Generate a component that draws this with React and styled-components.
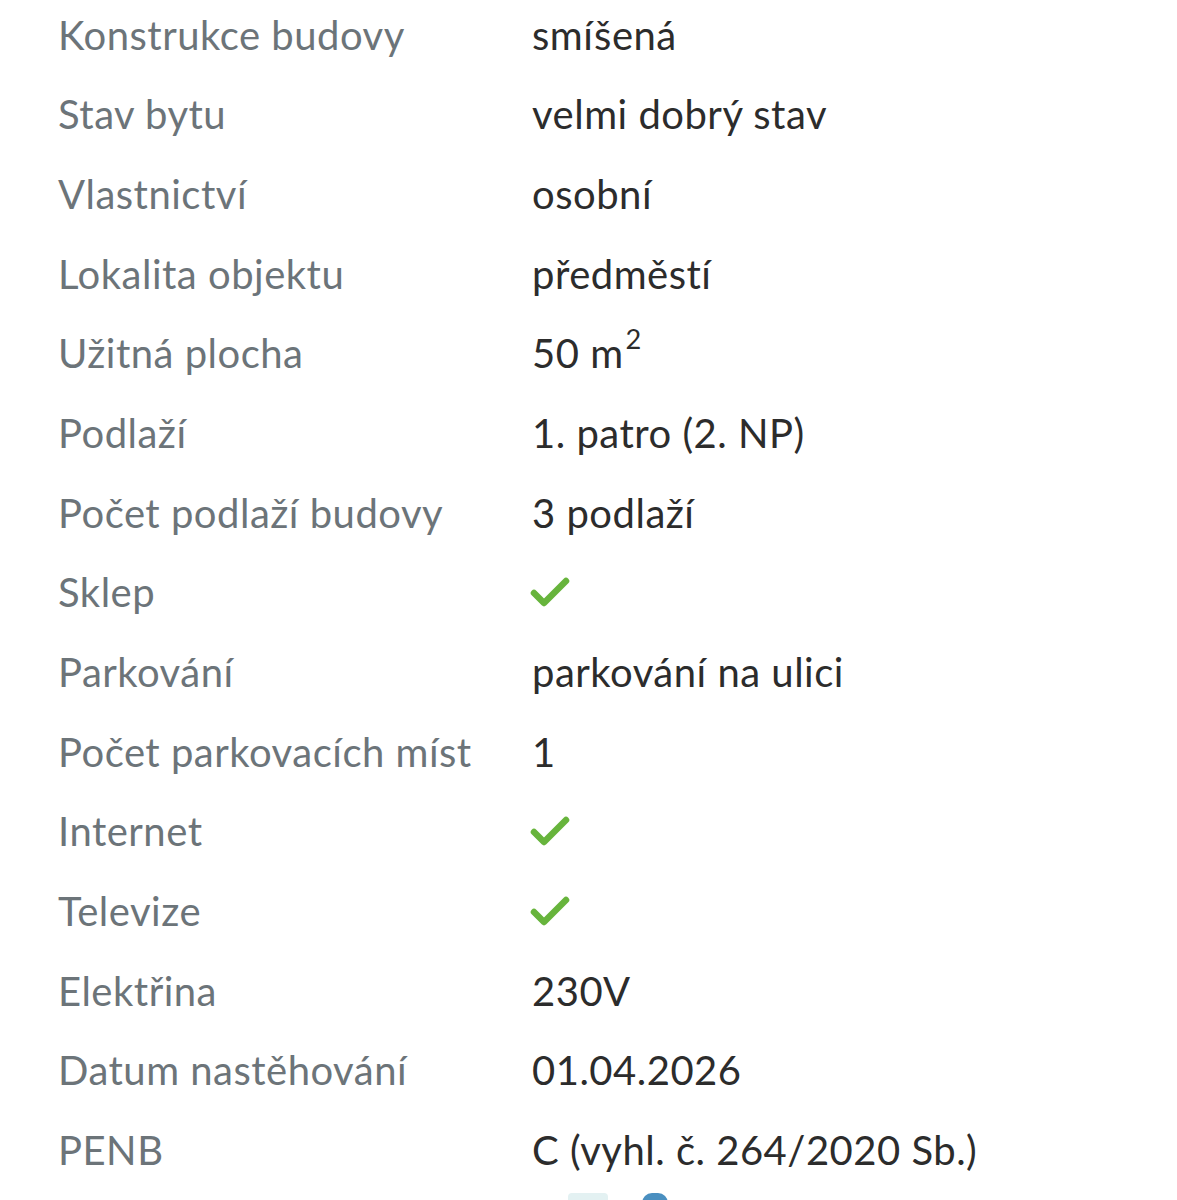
import React from 'react'
import styled, { createGlobalStyle } from 'styled-components'

const GlobalStyle = createGlobalStyle`
  body {
    margin: 0;
    background: #ffffff;
    font-family: Lato, "Noto Sans", sans-serif;
  }
`

const Table = styled.div`
  display: grid;
  grid-template-columns: 474px 1fr;
  grid-auto-rows: 79.65px;
  margin-top: -5px;
  padding-left: 58px;
`

const Label = styled.div`
  display: flex;
  align-items: center;
  color: #6c7479;
  font-size: 40px;
  letter-spacing: 0.5px;
  white-space: nowrap;
`

const Value = styled(Label)`
  color: #2c2c2c;
`

const Sup = styled.span`
  font-size: 0.68em;
  position: relative;
  top: -0.55em;
  margin-left: 2px;
`

const Check = styled.svg`
  width: 42px;
  height: 34px;
  margin-left: -3px;
`

const Footer = styled.div`
  display: flex;
  gap: 34px;
  padding-left: 568px;
  padding-top: 3px;
`

const Pill = styled.div`
  width: ${(p) => p.w}px;
  height: 20px;
  border-radius: ${(p) => p.r}px;
  background: ${(p) => p.color};
`

const Tick = () => (
  <Check viewBox="0 0 42 34">
    <path
      d="M5 18 L15 28 L37 6"
      fill="none"
      stroke="#67b43c"
      strokeWidth="6.5"
      strokeLinecap="round"
      strokeLinejoin="round"
    />
  </Check>
)

const rows = [
  ['Konstrukce budovy', 'smíšená'],
  ['Stav bytu', 'velmi dobrý stav'],
  ['Vlastnictví', 'osobní'],
  ['Lokalita objektu', 'předměstí'],
  ['Užitná plocha', <>50 m<Sup>2</Sup></>],
  ['Podlaží', '1. patro (2. NP)'],
  ['Počet podlaží budovy', '3 podlaží'],
  ['Sklep', true],
  ['Parkování', 'parkování na ulici'],
  ['Počet parkovacích míst', '1'],
  ['Internet', true],
  ['Televize', true],
  ['Elektřina', '230V'],
  ['Datum nastěhování', '01.04.2026'],
  ['PENB', 'C (vyhl. č. 264/2020 Sb.)'],
]

export default function App() {
  return (
    <>
      <GlobalStyle />
      <Table>
        {rows.map(([label, value]) => (
          <React.Fragment key={label}>
            <Label>{label}</Label>
            <Value>{value === true ? <Tick /> : value}</Value>
          </React.Fragment>
        ))}
      </Table>
      <Footer>
        <Pill color="#e3f1f2" w={40} r={4} />
        <Pill color="#4a8fc0" w={26} r={13} />
      </Footer>
    </>
  )
}
